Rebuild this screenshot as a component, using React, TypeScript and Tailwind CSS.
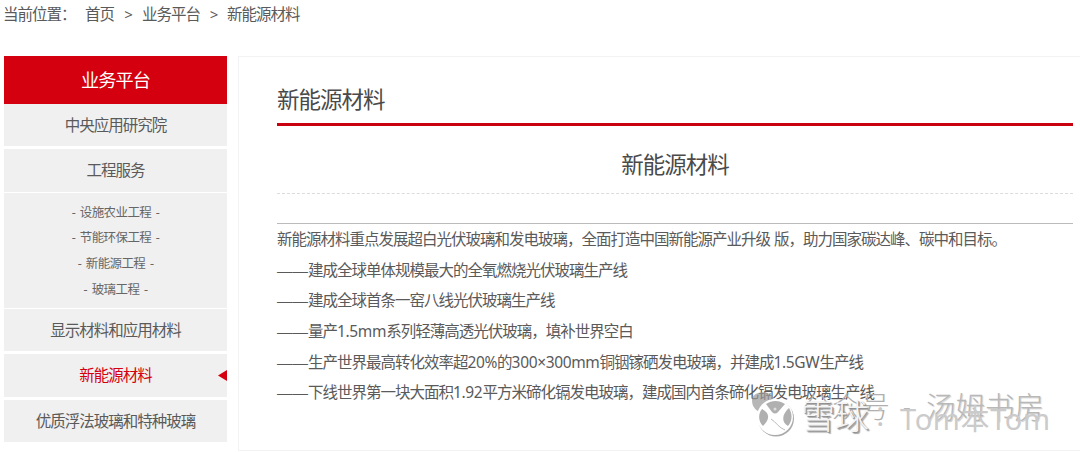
const menuItems = [
  { label: '中央应用研究院' },
  { label: '工程服务', children: ['设施农业工程', '节能环保工程', '新能源工程', '玻璃工程'] },
  { label: '显示材料和应用材料' },
  { label: '新能源材料', active: true },
  { label: '优质浮法玻璃和特种玻璃' },
]

const achievements = [
  '建成全球单体规模最大的全氧燃烧光伏玻璃生产线',
  '建成全球首条一窑八线光伏玻璃生产线',
  '量产1.5mm系列轻薄高透光伏玻璃，填补世界空白',
  '生产世界最高转化效率超20%的300×300mm铜铟镓硒发电玻璃，并建成1.5GW生产线',
  '下线世界第一块大面积1.92平方米碲化镉发电玻璃，建成国内首条碲化镉发电玻璃生产线',
]

// Latin runs need looser tracking than the Chinese text around them
function MixedText({ text }: { text: string }) {
  return text.split(/([0-9A-Za-z.%×]+)/).map((part, i) =>
    i % 2 ? (
      <span key={i} className="tracking-[-0.35px]">
        {part}
      </span>
    ) : (
      part
    ),
  )
}

function Breadcrumb() {
  return (
    <nav className="flex h-7 items-center pt-px pl-[3px] text-[15.5px] tracking-[-1px] text-[#5a5a5a]">
      <span className="w-[82px]">当前位置：</span>
      <a>首页</a>
      <span className="w-[28px] text-center text-[15px]">&gt;</span>
      <a>业务平台</a>
      <span className="w-[27px] text-center text-[15px]">&gt;</span>
      <a>新能源材料</a>
    </nav>
  )
}

function Sidebar() {
  return (
    <aside className="w-[223px] text-center">
      <h2 className="h-12 bg-[#d4000f] text-[18.2px] leading-[49px] tracking-[-1px] text-white">业务平台</h2>
      <ul>
        {menuItems.map((item) => (
          <li key={item.label} className={item.children ? 'mb-px' : 'mb-[3px]'}>
            <div
              className={`relative h-[42.4px] bg-[#f0f0f0] text-[15.5px] leading-[43px] tracking-[-1px] ${
                item.active ? 'text-[#d4000f]' : 'text-[#5a5a5a]'
              }`}
            >
              {item.label}
              {item.active && (
                <svg className="absolute top-4 right-0" width="9" height="11" viewBox="0 0 9 11">
                  <path d="M0 5.5 9 0V11Z" fill="#d4000f" />
                </svg>
              )}
            </div>
            {item.children && (
              <ul className="mt-px h-[115px] bg-[#f0f0f0] pt-[7px] text-[12.5px] leading-[25.6px] tracking-[-0.6px] text-[#666] [word-spacing:1.2px]">
                {item.children.map((child) => (
                  <li key={child}>
                    <span className="inline-block w-[5px]">-</span> {child} <span className="inline-block w-[5px]">-</span>
                  </li>
                ))}
              </ul>
            )}
          </li>
        ))}
      </ul>
    </aside>
  )
}

function Article() {
  return (
    <main className="ml-[11px] h-[395px] w-[842px] border border-r-0 border-[#f3f3f3] pr-[7px] pl-[38px]">
      <h1 className="mt-6 h-[45px] border-b-[3px] border-[#c9000e] text-[22.5px] leading-[37px] tracking-[-1px] text-[#4a4a4a]">
        新能源材料
      </h1>
      <h2 className="h-[68px] border-b border-dashed border-[#dcdcdc] text-center text-[22.5px] leading-[78px] tracking-[-1px] text-[#4a4a4a]">
        新能源材料
      </h2>
      <div className="mt-[29px] border-t border-[#bbb] text-[15.5px] leading-[31px] tracking-[-1px] whitespace-nowrap text-[#5a5a5a]">
        <p className="h-[30.7px] [word-spacing:1px]">
          新能源材料重点发展超白光伏玻璃和发电玻璃，全面打造中国新能源产业升级 版，助力国家碳达峰、碳中和目标。
        </p>
        {achievements.map((line) => (
          <p key={line} className="h-[30.7px]">
            <span className="font-['Liberation_Sans'] leading-none tracking-normal">——</span>
            <MixedText text={line} />
          </p>
        ))}
      </div>
    </main>
  )
}

function Watermark() {
  return (
    <div className="pointer-events-none absolute inset-0 overflow-hidden font-light whitespace-nowrap">
      <span className="absolute top-[387px] left-[803px] text-[29px] leading-[40px] text-[#b0b0b0]">公众号</span>
      <span className="absolute top-[386px] left-[903px] w-2 overflow-hidden text-[24px] leading-[40px] text-[#b8b8b8]">-</span>
      <span className="absolute top-[387px] left-[926px] text-[29.5px] leading-[40px] text-[#b8b8b8] [text-shadow:1px_1px_1px_#ccc]">
        汤姆书房
      </span>
      <span className="absolute top-[395px] left-[801px] text-[34px] leading-[42px] text-[#f4f4f4] [text-shadow:1px_1px_1px_#888,2px_2px_1px_#aaa]">
        雪球
      </span>
      <span className="absolute top-[395px] left-[873px] text-[29px] leading-[40px] text-[#c8c8c8]">：</span>
      <span className="absolute top-[399px] left-[900px] text-[29px] leading-[40px] font-normal tracking-[0.6px] text-[#cbcbcb]">
        Tom本Tom
      </span>
      <svg className="absolute top-[388px] left-[750px]" width="48" height="52" viewBox="0 0 48 52" fill="none">
        <path d="M2 12C2 3 19 1 24 10L10 24C5 22 2 18 2 12Z" fill="#999" fillOpacity=".7" />
        <circle cx="26" cy="30.5" r="18" fill="#aaa" />
        <circle cx="25" cy="29" r="18" fill="#fff" />
        <path d="M12 21C20 25 20 31 13 38C8 33 8 26 12 21ZM16 16C22 12 29 12 35 16L28 24C26 26 24 26 22 24ZM39 20C43 27 42 33 38 38C31 34 32 26 39 20Z" fill="#b0b0b0" />
        <path d="M21 31C26 34 29 40 35 42" stroke="#bbb" strokeWidth="1" />
        <circle cx="25" cy="21" r="1.5" fill="#ddd" />
      </svg>
    </div>
  )
}

export default function App() {
  return (
    <div className="relative h-[452px] w-[1080px] overflow-hidden bg-white font-['Noto_Sans','Noto_Sans_CJK_SC',sans-serif]">
      <Breadcrumb />
      <div className="mt-7 flex pl-1">
        <Sidebar />
        <Article />
      </div>
      <Watermark />
    </div>
  )
}
